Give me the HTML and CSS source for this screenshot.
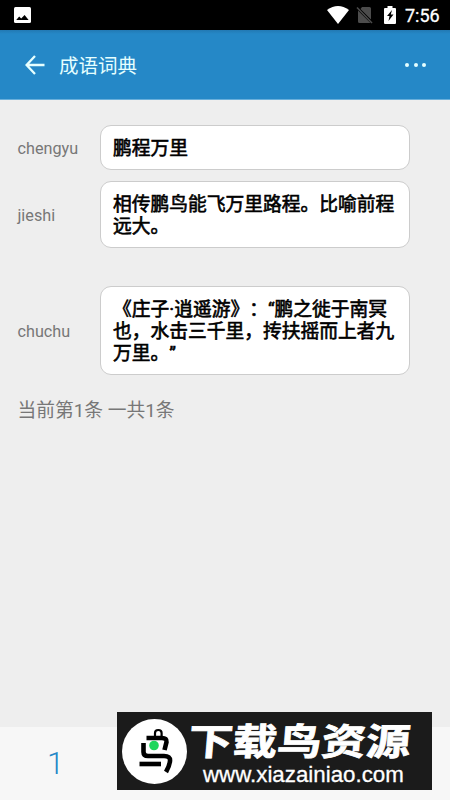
FILE: index.html
```html
<!DOCTYPE html>
<html lang="zh-CN">
<head>
  <meta charset="UTF-8">
  <meta name="viewport" content="width=device-width, initial-scale=1.0">
  <title>成语词典</title>
  <link rel="stylesheet" href="styles.css">
</head>
<body>
  <div class="status-bar">
    <svg class="icon-picture" width="17" height="16" viewBox="0 0 17 16">
      <rect width="17" height="16" rx="1.5" fill="#fff"/>
      <path d="M2.2 13 L5.2 9.6 L7.2 11.5 L10.6 8 L14.6 13 Z" fill="#000"/>
    </svg>
    <div class="status-right">
      <svg class="icon-wifi" width="22" height="18" viewBox="0 0 22 18">
        <path d="M0 4 Q11 -4 22 4 L11 18 Z" fill="#fff"/>
      </svg>
      <svg class="icon-sim" width="17" height="18" viewBox="0 0 17 18">
        <path d="M6 1 H13.5 Q15 1 15 2.5 V13.5 L4.5 3 Z M2 4.5 L14.5 17 H3.5 Q2 17 2 15.5 Z" fill="#4c4c4c"/>
        <path d="M1 1.5 L16 17" stroke="#4c4c4c" stroke-width="1.5"/>
      </svg>
      <svg class="icon-battery" width="12" height="18" viewBox="0 0 12 18">
        <path d="M3.5 0 H8.5 V2 H11 Q12 2 12 3 V17 Q12 18 11 18 H1 Q0 18 0 17 V3 Q0 2 1 2 H3.5 Z" fill="#fff"/>
        <path d="M8 4 L3 10 H5.5 L4.5 15 L9.5 8.5 H6.8 Z" fill="#000"/>
      </svg>
      <span class="clock">7:56</span>
    </div>
  </div>

  <header>
    <svg class="back" width="20" height="20" viewBox="0 0 20 20">
      <path d="M10 1 L1.6 10 L10 19 M1.6 10 H19.5" fill="none" stroke="#e6ffff" stroke-width="2.3"/>
    </svg>
    <h1>成语词典</h1>
    <div class="more"><i></i><i></i><i></i></div>
  </header>

  <main>
    <div class="row">
      <label>chengyu</label>
      <div class="field">鹏程万里</div>
    </div>
    <div class="row">
      <label>jieshi</label>
      <div class="field">相传鹏鸟能飞万里路程。比喻前程<br>远大。</div>
    </div>
    <div class="row row-source">
      <label>chuchu</label>
      <div class="field">《庄子·逍遥游》：“鹏之徙于南冥<br>也，水击三千里，抟扶摇而上者九<br>万里。”</div>
    </div>
    <p class="count">当前第1条 一共1条</p>
  </main>

  <footer>
    <span class="page">1</span>
  </footer>

  <div class="watermark">
    <svg class="bird" width="65" height="65" viewBox="0 0 65 65">
      <circle cx="32.5" cy="32.5" r="32.5" fill="#fff"/>
      <g fill="none" stroke="#000" stroke-width="4.6">
        <path d="M33 18 V14 Q33 11 36.3 11 Q39.6 11 39.6 14 V18" stroke-width="2.2"/>
        <path d="M24.5 19 H40 Q45 19 44.5 23 L42.5 31"/>
        <path d="M21.5 24 V33 Q21.5 37 26 37 H42 Q48.5 37 48 42 Q47.5 47 44 53"/>
        <path d="M17.5 45 H39"/>
      </g>
      <circle cx="32" cy="26.5" r="4.8" fill="#20d65c"/>
    </svg>
    <div class="watermark-text">
      <div class="brand">下载鸟资源</div>
      <div class="site">www.xiazainiao.com</div>
    </div>
  </div>
</body>
</html>
```
FILE: styles.css
```css
* {
  margin: 0;
  padding: 0;
  box-sizing: border-box;
}

body {
  height: 800px;
  display: flex;
  flex-direction: column;
  font-family: Roboto, "Noto Sans CJK SC", sans-serif;
  background: #eee;
  overflow: hidden;
}

.status-bar {
  height: 30px;
  padding: 0 10px 0 14px;
  display: flex;
  align-items: center;
  justify-content: space-between;
  background: #000;
}

.status-bar svg {
  display: block;
}

.status-right {
  display: flex;
  align-items: center;
}

.icon-sim {
  margin-left: 7px;
}

.icon-battery {
  margin-left: 11px;
}

.clock {
  width: 35px;
  margin-left: 9px;
  padding-top: 1px;
  font-size: 18px;
  line-height: 30px;
  color: #fff;
  -webkit-text-stroke: 0.3px #fff;
}

header {
  height: 70px;
  padding: 0 24px 0 25px;
  display: flex;
  align-items: center;
  background: linear-gradient(#2279b3, #2588c7 4px);
  border-bottom: 1px solid #69afdb;
}

h1 {
  margin-left: 14px;
  padding-top: 4px;
  font-size: 19.5px;
  font-weight: 400;
  line-height: 30px;
  color: #e6ffff;
}

.more {
  margin-left: auto;
  display: flex;
  gap: 4.4px;
}

.more i {
  width: 4px;
  height: 4px;
  border-radius: 50%;
  background: #e6ffff;
}

main {
  flex: 1;
  padding: 25px 40px 0 17.5px;
}

.row {
  display: flex;
  align-items: center;
  margin-bottom: 11px;
}

.row-source {
  margin-top: 38px;
}

label {
  width: 82.5px;
  padding-top: 1px;
  font-size: 16.2px;
  color: #777;
}

.field {
  flex: 1;
  padding: 11.5px 0 9.5px 12px;
  border: 1px solid #ccc;
  border-radius: 11px;
  background: #fff;
  font-size: 18.75px;
  line-height: 22px;
  white-space: nowrap;
  text-spacing-trim: space-all;
  color: #000;
  -webkit-text-stroke: 0.6px #000;
}

.count {
  margin-top: 21px;
  font-size: 18.75px;
  line-height: 30px;
  color: #777;
}

footer {
  height: 73px;
  padding-left: 47px;
  display: flex;
  align-items: center;
  background: #f7f7f7;
}

.page {
  font-size: 31px;
  font-weight: 300;
  color: #2588c7;
}

/* site badge laid over the bottom bar */
.watermark {
  position: absolute;
  left: 117px;
  top: 712px;
  width: 315px;
  height: 78px;
  padding-left: 5px;
  display: flex;
  align-items: center;
  background: #1b1b1b;
  color: #fff;
}

.watermark-text {
  margin-left: 2px;
}

.brand {
  height: 42px;
  padding-top: 3px;
  font-family: "Noto Sans CJK SC", sans-serif;
  font-size: 37px;
  font-weight: 700;
  line-height: 42px;
  white-space: nowrap;
  transform: scaleX(1.2) skewX(-4deg);
  transform-origin: 0 50%;
  -webkit-text-stroke: 0.8px #fff;
}

.site {
  margin-left: 14px;
  padding-top: 5px;
  font-family: "Liberation Sans", sans-serif;
  font-size: 22.3px;
  line-height: 26px;
  -webkit-text-stroke: 0.3px #fff;
}
```
